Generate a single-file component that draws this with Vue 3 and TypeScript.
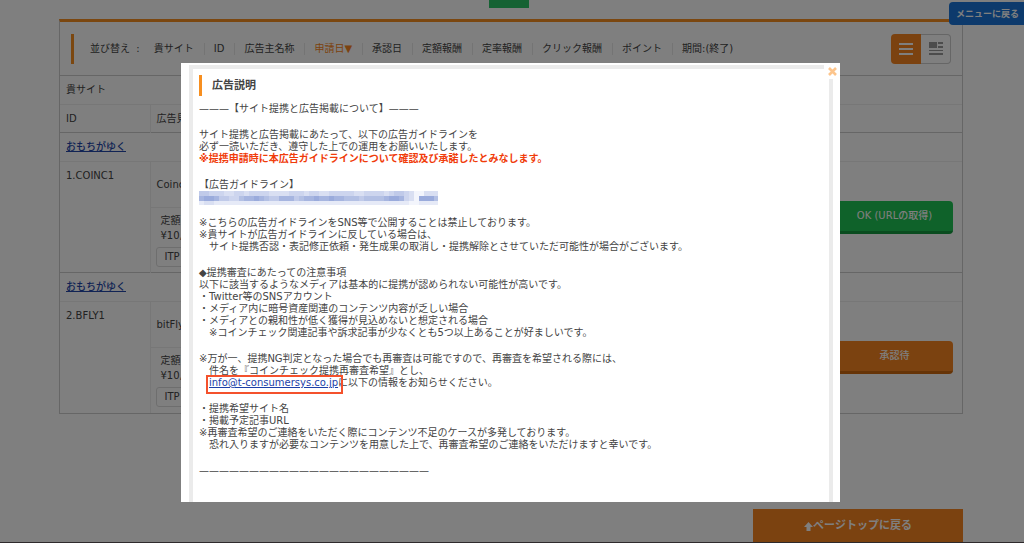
<script setup lang="ts">
interface Ad {
  id: string
  name: string
  rewardLabel: string
  reward: string
  action: string
  kind: 'ok' | 'wait'
}

const sorts: string[] = ['貴サイト', 'ID', '広告主名称', '申請日▼', '承認日', '定額報酬', '定率報酬', 'クリック報酬', 'ポイント', '期間:(終了)']
const activeSort = '申請日▼'

const ads: Ad[] = [
  { id: '1.COINC1', name: 'Coinc', rewardLabel: '定額', reward: '¥10,', action: 'OK (URLの取得)', kind: 'ok' },
  { id: '2.BFLY1', name: 'bitFly', rewardLabel: '定額', reward: '¥10,', action: '承認待', kind: 'wait' },
]

const rule = '—'.repeat(23)

// Shade strength (0-9) of each cell in the masked URL
const mosaic: string[] = [
  '44333223323333222233323322333332233332344320022222',
  '67764433566765446664566766766555455556776320777567',
  '12211111111111111111111111111111111111111100111111',
]
const cells = mosaic.flatMap((row, y) =>
  [...row].map((v, x) => ({ x: x * 5, y: y * 5, o: Number(v) / 12 })).filter((c) => c.x < 239),
)
</script>

<template>
  <div class="page">
    <main class="content">
      <div class="tab"></div>

      <section class="panel">
        <div class="toolbar">
          <div class="sorts">
            <span class="sort-title">並び替え &nbsp;:</span>
            <button v-for="s in sorts" :key="s" type="button" class="sort" :class="{ active: s === activeSort }">{{ s }}</button>
          </div>
          <div class="views">
            <button type="button" class="view on" aria-label="リスト表示">
              <svg width="14" height="12" viewBox="0 0 14 12"><path d="M0 0h14v2H0zM0 5h14v2H0zM0 10h14v2H0z" fill="#fff" /></svg>
            </button>
            <button type="button" class="view" aria-label="詳細表示">
              <svg width="14" height="13" viewBox="0 0 14 13"><path d="M0 0h8v6H0zM9 0h5v2H9zM9 4h5v2H9zM0 8h14v1H0zM0 11h14v2H0z" fill="#999" /></svg>
            </button>
          </div>
        </div>

        <table class="list">
          <colgroup>
            <col class="col-id" />
            <col />
            <col class="col-action" />
          </colgroup>
          <thead>
            <tr><th colspan="3">貴サイト</th></tr>
            <tr><th class="split">ID</th><th colspan="2">広告見</th></tr>
          </thead>
          <tbody v-for="ad in ads" :key="ad.id">
            <tr><td colspan="3"><a href="#" class="link">おもちがゆく</a></td></tr>
            <tr>
              <td rowspan="2" class="id split">{{ ad.id }}</td>
              <td class="name">{{ ad.name }}</td>
              <td rowspan="2" class="action"><button type="button" class="status" :class="ad.kind">{{ ad.action }}</button></td>
            </tr>
            <tr>
              <td class="detail">
                <div class="reward">{{ ad.rewardLabel }}<br />{{ ad.reward }}</div>
                <span class="badge">ITP</span>
              </td>
            </tr>
          </tbody>
        </table>
      </section>

      <a href="#" class="page-top">
        <svg width="9" height="9" viewBox="0 0 9 9"><path d="M4.500 0L9 5H6.500V9H2.500V5H0z" fill="#fff" /></svg>ページトップに戻る
      </a>
    </main>
    <a href="#" class="menu">メニューに戻る</a>

    <div class="overlay">
      <div class="modal" role="dialog" aria-labelledby="dialog-title">
        <button type="button" class="close" aria-label="閉じる">
          <svg width="9" height="9" viewBox="0 0 9 9"><path d="M1 1L8 8M8 1L1 8" stroke="#fdc58c" stroke-width="2.600" /></svg>
        </button>
        <div class="frame">
          <h2 id="dialog-title">広告説明</h2>
          <div class="body">
            <p>———【サイト提携と広告掲載について】———</p>
            <p>
              サイト提携と広告掲載にあたって、以下の広告ガイドラインを<br />
              必ず一読いただき、遵守した上での運用をお願いいたします。<br />
              <strong>※提携申請時に本広告ガイドラインについて確認及び承諾したとみなします。</strong>
            </p>
            <div class="guide">
              <p>【広告ガイドライン】</p>
              <svg width="239" height="14" viewBox="0 0 239 14" aria-hidden="true">
                <rect width="239" height="14" fill="#f3f5fc" />
                <rect v-for="c in cells" :key="`${c.x}-${c.y}`" :x="c.x" :y="c.y" width="5" height="5" fill="#5a76c4" :fill-opacity="c.o" />
              </svg>
            </div>
            <p>
              ※こちらの広告ガイドラインをSNS等で公開することは禁止しております。<br />
              ※貴サイトが広告ガイドラインに反している場合は、<br />
              　サイト提携否認・表記修正依頼・発生成果の取消し・提携解除とさせていただ可能性が場合がございます。
            </p>
            <p>
              ◆提携審査にあたっての注意事項<br />
              以下に該当するようなメディアは基本的に提携が認められない可能性が高いです。<br />
              ・Twitter等のSNSアカウント<br />
              ・メディア内に暗号資産関連のコンテンツ内容が乏しい場合<br />
              ・メディアとの親和性が低く獲得が見込めないと想定される場合<br />
              　※コインチェック関連記事や訴求記事が少なくとも5つ以上あることが好ましいです。
            </p>
            <p>
              ※万が一、提携NG判定となった場合でも再審査は可能ですので、再審査を希望される際には、<br />
              　件名を『コインチェック提携再審査希望』とし、<br />
              　<a href="mailto:info@t-consumersys.co.jp" class="mail">info@t-consumersys.co.jp</a>に以下の情報をお知らせください。
            </p>
            <p>
              ・提携希望サイト名<br />
              ・掲載予定記事URL<br />
              ※再審査希望のご連絡をいただく際にコンテンツ不足のケースが多発しております。<br />
              　恐れ入りますが必要なコンテンツを用意した上で、再審査希望のご連絡をいただけますと幸いです。
            </p>
            <p>{{ rule }}</p>
          </div>
        </div>
      </div>
    </div>
    <div class="dock"></div>
  </div>
</template>

<style>
body {
  margin: 0;
  background: #fff;
}
</style>

<style scoped>
* {
  box-sizing: border-box;
}
.page {
  min-height: 100vh;
  padding: 0 61px 0 59px;
  font-family: "DejaVu Sans", "Noto Sans CJK JP", sans-serif;
  font-size: 10px;
  line-height: 12px;
  color: #444;
}
button {
  font: inherit;
  color: inherit;
  border: 0;
  padding: 0;
  background: none;
}
.content {
  display: flex;
  flex-direction: column;
}
.tab {
  align-self: center;
  width: 40px;
  height: 8px;
  margin-right: 4px;
  background: #2bc567;
}
.panel {
  margin-top: 11px;
  border: 1px solid #ccc;
  border-top: 3px solid #f78f20;
}
.toolbar {
  display: flex;
  align-items: center;
  justify-content: space-between;
  height: 53px;
  padding: 0 11px;
}
.sorts {
  display: flex;
  align-items: center;
  height: 30px;
  padding-left: 16px;
  border-left: 3px solid #f78f20;
  white-space: nowrap;
}
.sort-title {
  margin-right: 5px;
}
.sort {
  padding: 0 10px 0 9px;
  border-right: 1px solid #e8e8e8;
}
.sort:last-child {
  border-right: 0;
}
.sort.active {
  color: #f78420;
}
.views {
  display: flex;
}
.view {
  display: flex;
  align-items: center;
  justify-content: center;
  width: 30px;
  height: 30px;
  border: 1px solid #ccc;
  border-left: 0;
  border-radius: 0 4px 4px 0;
}
.view.on {
  border: 0;
  border-radius: 4px 0 0 4px;
  background: #f78420;
}
.list {
  width: 100%;
  border-collapse: collapse;
  table-layout: fixed;
}
.col-id {
  width: 90px;
}
.col-action {
  width: 126px;
}
th,
td {
  height: 29px;
  padding: 0 6px;
  text-align: left;
  font-weight: 400;
  border-top: 1px solid #efefef;
}
thead tr:last-child th {
  height: 28px;
}
thead tr:first-child th,
tbody tr:first-child td {
  border-top: 1px solid #ccc;
}
.split {
  border-right: 1px solid #efefef;
}
.link {
  color: #2347a8;
  font-weight: 500;
}
.id {
  padding-top: 8px;
  vertical-align: top;
}
.name {
  height: 46px;
}
.detail {
  height: 65px;
  padding: 0 5px;
}
.reward {
  padding-left: 5px;
  line-height: 15px;
}
.badge {
  display: inline-block;
  margin-top: 4px;
  padding: 3px 8px;
  border: 1px solid #ddd;
  border-radius: 3px;
}
.action {
  padding: 0 9px 0 0;
}
.status {
  display: block;
  width: 100%;
  height: 33px;
  border-radius: 4px;
  color: #fff;
  font-weight: 500;
}
.status.ok {
  background: #1fc455;
  border-bottom: 3px solid #14983e;
}
.status.wait {
  background: #f78420;
  border-bottom: 3px solid #cc690f;
}
.page-top {
  display: flex;
  align-items: center;
  justify-content: center;
  align-self: flex-end;
  width: 210px;
  height: 35px;
  margin-top: 95px;
  background: #f78420;
  color: #fff;
  font-size: 11px;
  font-weight: 700;
  text-decoration: none;
}
.menu {
  position: fixed;
  top: 2px;
  right: 0;
  padding: 6px 5px 5px 7px;
  border-radius: 4px 0 0 4px;
  background: #1a75d8;
  color: #fff;
  font-size: 9px;
  font-weight: 700;
  text-decoration: none;
}
.overlay {
  position: fixed;
  inset: 0;
  display: flex;
  padding: 63px 184px 41px 181px;
  background: rgba(0, 0, 0, 0.5);
}
.modal {
  position: relative;
  flex: 1;
  display: flex;
  padding: 2px 7px 0 8px;
  background: #fff;
  overflow: hidden;
}
.frame {
  flex: 1;
  padding: 6px;
  border: 4px solid #ebebeb;
  border-bottom: 0;
}
.close {
  position: absolute;
  top: 0;
  right: 0;
  display: flex;
  align-items: center;
  justify-content: center;
  width: 16px;
  height: 16px;
  background: #fff;
}
h2 {
  margin: 0 0 7px;
  padding-left: 10px;
  border-left: 3px solid #f78f20;
  font-size: 11px;
  line-height: 21px;
}
.body {
  display: flex;
  flex-direction: column;
  gap: 14px;
  white-space: nowrap;
}
p {
  margin: 0;
}
.guide svg {
  display: block;
}
.guide {
  height: 24px;
}
strong {
  color: #f03c0a;
}
.mail {
  position: relative;
  color: #1c3fa8;
}
.mail::after {
  content: "";
  position: absolute;
  inset: -2px -5px -6px -3px;
  border: 2px solid #f4512c;
}
.dock {
  position: fixed;
  right: 0;
  bottom: 0;
  left: 0;
  height: 1px;
  background: #2e2a2c;
}
</style>
